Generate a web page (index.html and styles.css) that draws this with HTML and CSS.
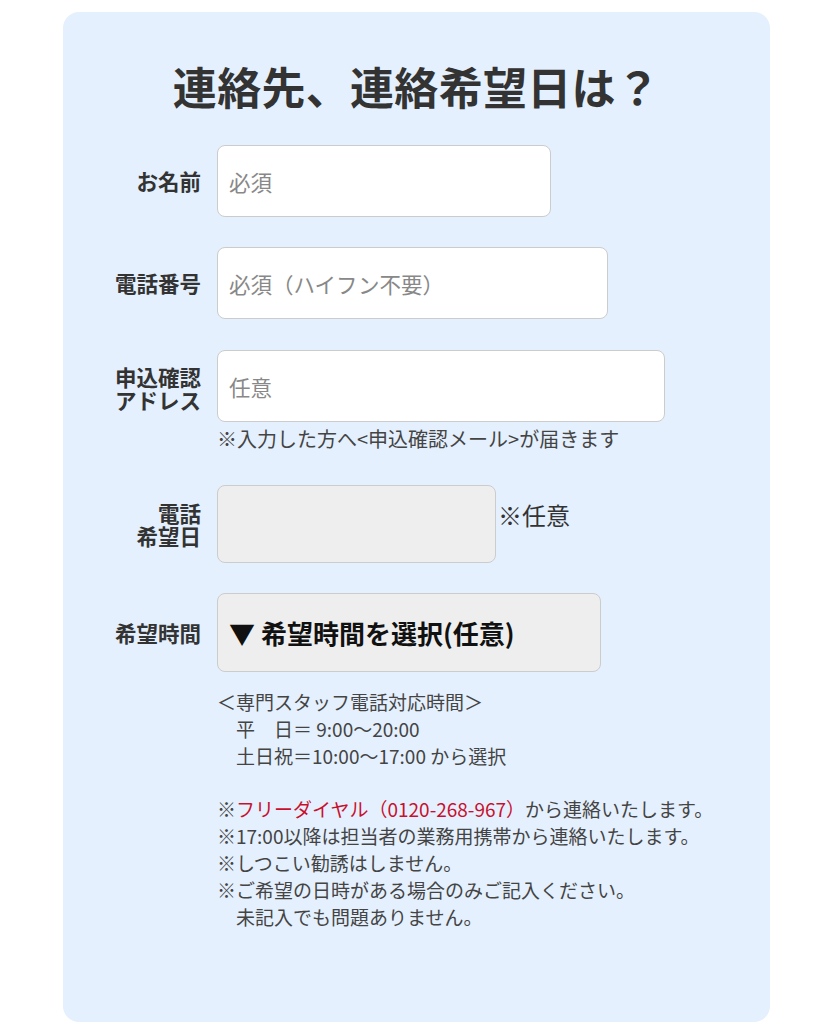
FILE: index.html
```html
<!DOCTYPE html>
<html lang="ja">
<head>
<meta charset="utf-8">
<link rel="stylesheet" href="styles.css">
</head>
<body>
<div class="card">
  <h1 class="title">連絡先、連絡希望日は？</h1>
  <div class="form">
    <div class="row">
      <div class="label">お名前</div>
      <div class="field"><div class="input w1"><span class="ph">必須</span></div></div>
    </div>
    <div class="row">
      <div class="label">電話番号</div>
      <div class="field"><div class="input w2"><span class="ph">必須（ハイフン不要）</span></div></div>
    </div>
    <div class="row row-top">
      <div class="label two">申込確認<br>アドレス</div>
      <div class="field">
        <div class="input w3"><span class="ph">任意</span></div>
        <div class="note">※入力した方へ&lt;申込確認メール&gt;が届きます</div>
      </div>
    </div>
    <div class="row">
      <div class="label two">電話<br>希望日</div>
      <div class="field inline">
        <div class="input date"></div>
        <span class="opt">※任意</span>
      </div>
    </div>
    <div class="row">
      <div class="label">希望時間</div>
      <div class="field"><div class="select">▼ 希望時間を選択(任意)</div></div>
    </div>
    <div class="row">
      <div class="label"></div>
      <div class="field info">
        <p class="block">＜専門スタッフ電話対応時間＞<br>　平　日＝ 9:00〜20:00<br>　土日祝＝10:00〜17:00 から選択</p>
        <p class="block">※<span class="red">フリーダイヤル（0120-268-967）</span>から連絡いたします。<br>※17:00以降は担当者の業務用携帯から連絡いたします。<br>※しつこい勧誘はしません。<br>※ご希望の日時がある場合のみご記入ください。<br>　未記入でも問題ありません。</p>
      </div>
    </div>
  </div>
</div>
</body>
</html>
```

FILE: styles.css
```css
html, body {
  margin: 0;
  padding: 0;
  background: #ffffff;
}
body {
  font-family: "Noto Sans CJK JP", "Noto Sans", sans-serif;
  color: #333333;
}
.card {
  margin: 12px 0 0 63px;
  width: 707px;
  height: 1010px;
  box-sizing: border-box;
  background: #e4f0fd;
  border-radius: 16px;
  padding-top: 44px;
}
.title {
  margin: 0;
  text-align: center;
  font-size: 44px;
  line-height: 60px;
  font-weight: 700;
  color: #333333;
  letter-spacing: 0.3px;
}
.form {
  margin-top: 29px;
  display: flex;
  flex-direction: column;
  gap: 30px;
}
.row {
  display: grid;
  grid-template-columns: 138px 1fr;
  column-gap: 16px;
  align-items: center;
}
.row-top {
  align-items: start;
  margin-top: 1px;
}
.row-top .label {
  margin-top: 15px;
}
.label {
  text-align: right;
  font-size: 21.5px;
  font-weight: 700;
  line-height: 22px;
  color: #333333;
}
.label.two {
  line-height: 23px;
}
.field {
  display: flex;
  flex-direction: column;
}
.field.inline {
  flex-direction: row;
  align-items: center;
}
.input {
  box-sizing: border-box;
  height: 72px;
  background: #ffffff;
  border: 1.5px solid #cccccc;
  border-radius: 8px;
  display: flex;
  align-items: center;
  padding-left: 11px;
}
.w1 { width: 334px; }
.w2 { width: 391px; }
.w3 { width: 448px; }
.date {
  width: 279px;
  height: 78px;
  background: #eeeeee;
}
.ph {
  font-size: 21.5px;
  color: #888888;
}
.note {
  margin-top: 4px;
  margin-bottom: 3px;
  font-size: 20px;
  line-height: 26px;
  color: #444444;
}
.opt {
  margin-left: 2px;
  margin-top: -20px;
  font-size: 24px;
  color: #333333;
}
.select {
  box-sizing: border-box;
  width: 384px;
  height: 79px;
  background: #eeeeee;
  border: 1.5px solid #cccccc;
  border-radius: 8px;
  display: flex;
  align-items: center;
  padding-left: 11px;
  font-size: 26px;
  font-weight: 700;
  color: #111111;
}
.info {
  margin-top: -14px;
}
.block {
  margin: 0 0 26px 0;
  font-size: 19px;
  line-height: 27px;
  color: #444444;
}
.red {
  color: #c8102e;
}
```
